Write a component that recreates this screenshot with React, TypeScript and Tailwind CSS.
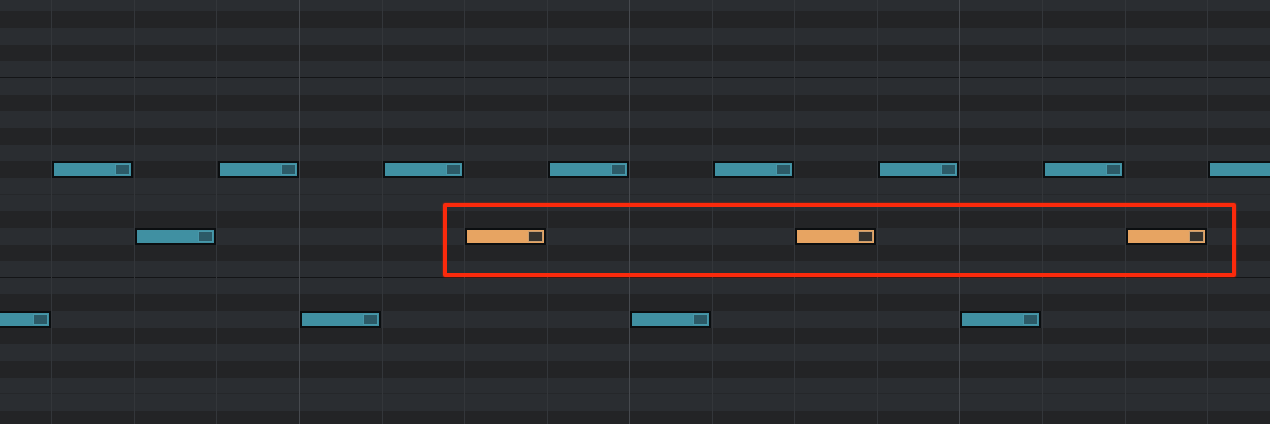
import React from 'react';

// Piano roll grid: 12 rows per octave over 200px, beats of 82.55px
const ROW_H = 200 / 12;
const BEAT_W = 82.55;
const GRID_X = 51.4; // x of the first beat line
const TOP = -16 / 3; // first row is partly scrolled off

const KEYS = ['E', 'D#', 'D', 'C#', 'C', 'B', 'A#', 'A', 'G#', 'G', 'F#', 'F'];
const rows = Array.from({ length: 26 }, (_, i) => KEYS[i % 12]);

type Note = { beat: number; row: number; selected?: boolean };

const notes: Note[] = [
  // F# hits every other beat
  ...[0, 2, 4, 6, 8, 10, 12, 14].map((b) => ({ beat: b, row: 10 })),
  // D line, most of it selected
  { beat: 1, row: 14 },
  { beat: 5, row: 14, selected: true },
  { beat: 9, row: 14, selected: true },
  { beat: 13, row: 14, selected: true },
  // low A
  ...[-1, 3, 7, 11].map((b) => ({ beat: b, row: 19 })),
];

const KeyRow = ({ name }: { name: string }) => {
  const black = name.includes('#');
  const bg = black ? 'bg-[#232426]' : 'bg-[#2a2d31]';
  let edge = '';
  if (name === 'C') edge = 'border-b-[1.5px] border-[#141517]';
  else if (name === 'F') edge = 'border-b border-[#25272a]';
  return <div className={`shrink-0 h-[16.6667px] box-border ${bg} ${edge}`} />;
};

const NoteBlock = ({ note }: { note: Note }) => {
  const left = GRID_X + note.beat * BEAT_W + 1;
  const top = TOP + note.row * ROW_H;
  return (
    <div
      className={`absolute flex items-center justify-end box-border border-2 border-[#0b0e10] pr-[1px] ${
        note.selected ? 'bg-[#e7a462]' : 'bg-[#4090a2]'
      }`}
      style={{ left, top, width: BEAT_W - 1.5, height: ROW_H }}
    >
      <div
        className={`w-[15px] h-[11px] border ${
          note.selected ? 'bg-[#36332e] border-[#c99e70]' : 'bg-[#2c5a67] border-[#4898aa]'
        }`}
      />
    </div>
  );
};

export default function App() {
  return (
    <div className="relative w-[1270px] h-[424px] overflow-hidden bg-[#232426]">
      <div className="flex flex-col mt-[-5.3333px]">
        {rows.map((k, i) => (
          <KeyRow key={i} name={k} />
        ))}
      </div>

      {/* beat and bar lines */}
      <div className="absolute inset-0 flex pointer-events-none">
        <div className="w-[51.4px] shrink-0" />
        {Array.from({ length: 15 }, (_, i) => (
          <div
            key={i}
            className={`w-[82.55px] shrink-0 border-l ${
              i % 4 === 3 ? 'border-[#46494e]' : 'border-[#33363a]'
            }`}
          />
        ))}
      </div>

      {notes.map((n, i) => (
        <NoteBlock key={i} note={n} />
      ))}

      {/* selection box */}
      <div className="absolute left-[443px] top-[203px] w-[793px] h-[74px] rounded-[2px] border-4 border-[#fb2a0c] shadow-[0_0_2px_rgba(255,40,0,0.7)]" />
    </div>
  );
}
